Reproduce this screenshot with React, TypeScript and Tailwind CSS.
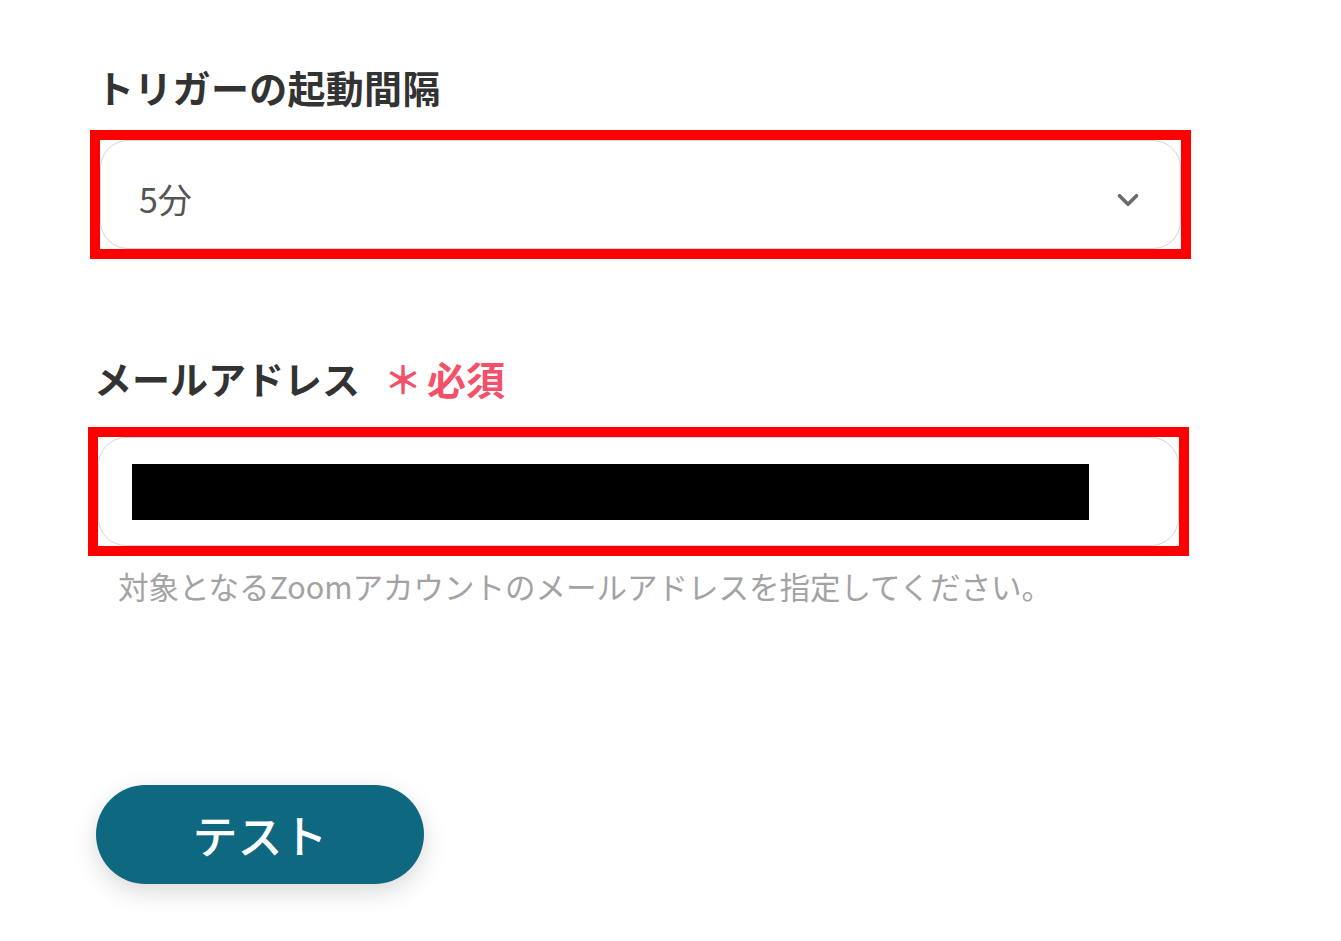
import { ChevronDown } from 'lucide-react';

const font = { fontFamily: '"Noto Sans CJK JP", "Noto Sans", sans-serif' };

function App() {
  return (
    <div className="min-h-screen w-full bg-white pl-[90px] pt-[68px]" style={font}>
      {/* トリガーの起動間隔 */}
      <div className="ml-[6px] text-[38px] leading-[37px] font-bold text-[#333333] tracking-[0.3px]">
        トリガーの起動間隔
      </div>

      {/* セレクト */}
      <div className="mt-[25px] w-[1101px] h-[129px] border-[10px] border-[#ff0000]">
        <div className="h-full w-full rounded-[28px] border-[1.5px] border-[#cfd5dc] bg-white flex items-center justify-between pl-[38px] pr-[35px] pt-[8px]">
          <span className="text-[34px] leading-none text-[#555555]">5分</span>
          <ChevronDown className="w-[34px] h-[34px] text-[#6b6b6b] mt-[2px]" strokeWidth={2.6} />
        </div>
      </div>

      {/* メールアドレス */}
      <div className="mt-[100px] ml-[4px] flex items-center text-[38px] leading-[38px] font-bold">
        <span className="text-[#333333]">メールアドレス</span>
        <span className="ml-[24px] text-[#f4506a]">＊</span>
        <span className="ml-[5px] text-[39px] text-[#f4506a]">必須</span>
      </div>

      <div className="mt-[30px] -ml-[2px] w-[1101px] h-[129px] border-[10px] border-[#ff0000]">
        <div className="h-full w-full rounded-[28px] border-[1.5px] border-[#cfd5dc] bg-white flex items-center pl-[33px]">
          <div className="w-[957px] h-[56px] bg-black" />
        </div>
      </div>

      <div className="mt-[16px] ml-[28px] text-[30.5px] leading-[29px] text-[#a3a3a3]">
        対象となるZoomアカウントのメールアドレスを指定してください。
      </div>

      {/* テストボタン */}
      <button className="mt-[184px] ml-[6px] w-[328px] h-[99px] rounded-full bg-[#0e6880] text-white text-[45px] font-medium shadow-[0_8px_24px_rgba(0,0,0,0.15)] flex items-center justify-center">
        テスト
      </button>
    </div>
  );
}

export default App;
